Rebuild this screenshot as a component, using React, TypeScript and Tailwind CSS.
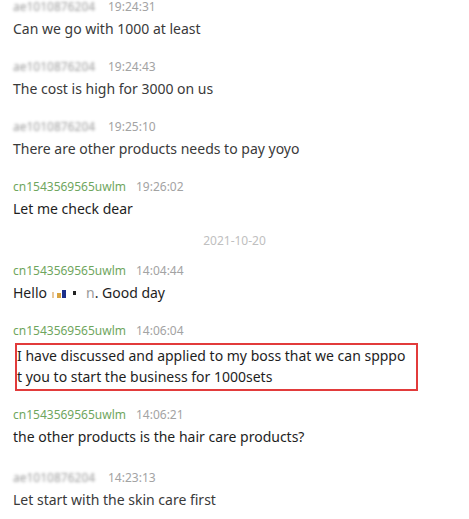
import React from "react";

const GREEN = "text-[#6fa65e]";

function Header({ name, time, blurred, h = "h-[20px] items-center" }: { name: string; time: string; blurred?: boolean; h?: string }) {
  return (
    <div className={h + " flex text-[12px] leading-[14px]"}>
      {blurred ? (
        <span className="inline-block w-[85px] text-transparent [text-shadow:0_0_3px_#9a9a9a] whitespace-nowrap">
          ae1010876204
        </span>
      ) : (
        <span className={GREEN}>{name}</span>
      )}
      <span className="ml-[10px] text-[#a3a3a3]">{time}</span>
    </div>
  );
}

function Block({
  name,
  time,
  blurred,
  text,
  dark,
  mb = "mb-[16px]",
  h,
}: {
  name?: string;
  time: string;
  blurred?: boolean;
  text: React.ReactNode;
  dark?: boolean;
  mb?: string;
  h?: string;
}) {
  return (
    <div className={mb}>
      <Header name={name || ""} time={time} blurred={blurred} h={h} />
      <div className={"h-[24px] leading-[24px] text-[14px] " + (dark ? "text-[#1e1e1e]" : "text-[#3a3a3a]")}>{text}</div>
    </div>
  );
}

export default function App() {
  return (
    <div
      className="w-[469px] h-[519px] bg-white overflow-hidden pl-[13px]"
      style={{ fontFamily: '"Noto Sans", "Open Sans", sans-serif' }}
    >
      <div>
        <Block blurred time="19:24:31" text="Can we go with 1000 at least" h="h-[17px] items-start" />
        <Block blurred time="19:24:43" text="The cost is high for 3000 on us" />
        <Block blurred time="19:25:10" text="There are other products needs to pay yoyo" />
        <Block name="cn1543569565uwlm" time="19:26:02" text="Let me check dear" dark mb="mb-[10px]" />
        <div className="h-[20px] mb-[10px] leading-[20px] text-center text-[12px] text-[#c0c0c0] pr-[13px]">
          2021-10-20
        </div>
        <Block
          name="cn1543569565uwlm"
          time="14:04:44"
          dark
          text={
            <span className="inline-flex items-center">
              Hello
              <span className="inline-flex items-center ml-[5px] gap-[1px]">
                <span className="w-[2px] h-[6px] bg-[#e8c79a] mt-[4px]" />
                <span className="w-[4px] h-[5px] bg-[#d9a441] mt-[4px] ml-[2px]" />
                <span className="w-[4px] h-[8px] bg-[#1d2f8a] mt-[1px]" />
                <span className="w-[3px] h-[4px] bg-[#222] ml-[6px] mt-[-1px]" />
              </span>
              <span className="ml-[10px] text-[#9a9a9a]">n</span>. Good day
            </span>
          }
        />
        <div className="mb-[14px]">
          <Header name="cn1543569565uwlm" time="14:06:04" />
          <div className="mt-[2px] ml-[2px] w-[403px] border-2 border-[#e23b3b] pb-[2px] text-[14px] leading-[21px] text-[#1e1e1e]">
            <div className="whitespace-nowrap">I have discussed and applied to my boss that we can spppo</div>
            <div className="whitespace-nowrap">t you to start the business for 1000sets</div>
          </div>
        </div>
        <Block name="cn1543569565uwlm" time="14:06:21" dark text="the other products is the hair care products?" mb="mb-[19px]" />
        <Block blurred time="14:23:13" text="Let start with the skin care first" />
      </div>
    </div>
  );
}
